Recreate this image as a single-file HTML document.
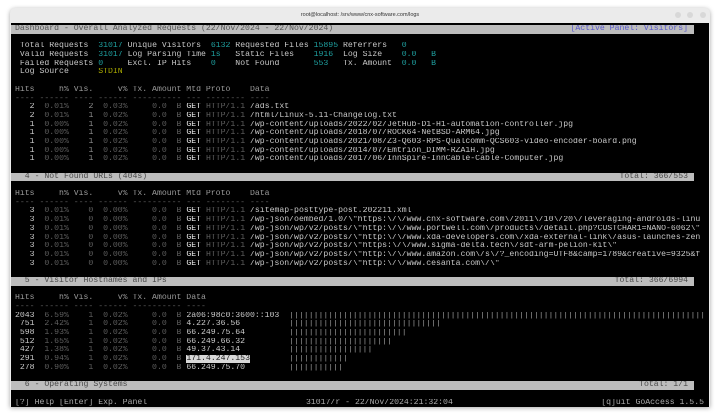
<!DOCTYPE html>
<html><head><meta charset="utf-8"><style>
html,body{margin:0;padding:0;background:#fff;width:720px;height:418px;overflow:hidden}
.win{position:absolute;left:10px;top:8px;width:700px;height:399px;background:#ebebeb;border-radius:5px 5px 0 0;box-shadow:0 1px 5px rgba(0,0,0,.35);overflow:hidden}
.title{position:absolute;left:0;right:0;top:4px;text-align:center;font:5.5px "Liberation Sans",sans-serif;color:#333}
.ctl{position:absolute;top:4px;width:6px;height:6px;border-radius:50%;background:#d8d8d8}
.term{position:absolute;left:1px;top:15px;width:698px;height:382px;padding-top:2px;background:#000;overflow:hidden;font-family:"Liberation Mono",monospace;font-size:8.17px}
.l{height:8.7px;line-height:8.7px;white-space:pre;padding-left:4px;color:#c8c8c8;overflow:hidden}
.bar{background:#bdbdbd;color:#4a4a4a;width:679px;position:relative}
.r{position:absolute;right:6px;top:0}
.t{color:#1e9e9e}.y{color:#a8a800}.d{color:#5e5e5e}.m{color:#8a8a8a}.w{color:#e8e8e8}.b{color:#9a9a9a}
.hl{background:#d8d8d8;color:#222}
.ap{color:#5a5acc}
</style></head><body>
<div class="win">
<div class="title">root@localhost: /srv/www/cnx-software.com/logs</div>
<div class="ctl" style="left:665px"></div><div class="ctl" style="left:677px"></div><div class="ctl" style="left:690px"></div>
<div class="term">
<div class="l bar" style="color:#555">Dashboard - Overall Analyzed Requests (22/Nov/2024 - 22/Nov/2024)<span class="r ap">[Active Panel: Visitors]</span></div>
<div class="l"> </div>
<div class="l"> Total Requests  <span class="t">31017 </span>Unique Visitors  <span class="t">6132 </span>Requested Files <span class="t">15895 </span>Referrers   <span class="t">0</span></div>
<div class="l"> Valid Requests  <span class="t">31017 </span>Log Parsing Time <span class="t">1s   </span>Static Files    <span class="t">1916  </span>Log Size    <span class="t">0.0   B</span></div>
<div class="l"> Failed Requests <span class="t">0     </span>Excl. IP Hits    <span class="t">0    </span>Not Found       <span class="t">553   </span>Tx. Amount  <span class="t">0.0   B</span></div>
<div class="l"> Log Source      <span class="y">STDIN</span></div>
<div class="l"> </div>
<div class="l b">Hits     h% Vis.     v% Tx. Amount Mtd Proto    Data</div>
<div class="l d">---- ------ ---- ------ ---------- --- -------- ----</div>
<div class="l">   2 <span class="d"> 0.01%    </span><span class="m">2</span><span class="d">  0.03%     0.0  B</span> <span class="w">GET</span> <span class="d">HTTP/1.1</span> /ads.txt</div>
<div class="l">   2 <span class="d"> 0.01%    </span><span class="m">1</span><span class="d">  0.02%     0.0  B</span> <span class="w">GET</span> <span class="d">HTTP/1.1</span> /html/Linux-5.11-Changelog.txt</div>
<div class="l">   1 <span class="d"> 0.00%    </span><span class="m">1</span><span class="d">  0.02%     0.0  B</span> <span class="w">GET</span> <span class="d">HTTP/1.1</span> /wp-content/uploads/2022/02/JetHub-D1-H1-automation-controller.jpg</div>
<div class="l">   1 <span class="d"> 0.00%    </span><span class="m">1</span><span class="d">  0.02%     0.0  B</span> <span class="w">GET</span> <span class="d">HTTP/1.1</span> /wp-content/uploads/2018/07/ROCK64-NetBSD-ARM64.jpg</div>
<div class="l">   1 <span class="d"> 0.00%    </span><span class="m">1</span><span class="d">  0.02%     0.0  B</span> <span class="w">GET</span> <span class="d">HTTP/1.1</span> /wp-content/uploads/2021/08/Z3-Q603-RPS-Qualcomm-QCS603-video-encoder-board.png</div>
<div class="l">   1 <span class="d"> 0.00%    </span><span class="m">1</span><span class="d">  0.02%     0.0  B</span> <span class="w">GET</span> <span class="d">HTTP/1.1</span> /wp-content/uploads/2014/07/Emtrion_DIMM-RZA1H.jpg</div>
<div class="l">   1 <span class="d"> 0.00%    </span><span class="m">1</span><span class="d">  0.02%     0.0  B</span> <span class="w">GET</span> <span class="d">HTTP/1.1</span> /wp-content/uploads/2017/06/InnSpire-InnCable-Cable-Computer.jpg</div>
<div class="l"> </div>
<div class="l bar">  4 - Not Found URLs (404s)<span class="r">Total: 366/553</span></div>
<div class="l"> </div>
<div class="l b">Hits     h% Vis.     v% Tx. Amount Mtd Proto    Data</div>
<div class="l d">---- ------ ---- ------ ---------- --- -------- ----</div>
<div class="l">   3 <span class="d"> 0.01%    0  0.00%     0.0  B</span> <span class="w">GET</span> <span class="d">HTTP/1.1</span> /sitemap-posttype-post.202211.xml</div>
<div class="l">   3 <span class="d"> 0.01%    0  0.00%     0.0  B</span> <span class="w">GET</span> <span class="d">HTTP/1.1</span> /wp-json/oembed/1.0/\"https:\/\/www.cnx-software.com\/2011\/10\/20\/leveraging-androids-linu</div>
<div class="l">   3 <span class="d"> 0.01%    0  0.00%     0.0  B</span> <span class="w">GET</span> <span class="d">HTTP/1.1</span> /wp-json/wp/v2/posts/\"http:\/\/www.portwell.com\/products\/detail.php?CUSTCHAR1=NANO-6062\"</div>
<div class="l">   3 <span class="d"> 0.01%    0  0.00%     0.0  B</span> <span class="w">GET</span> <span class="d">HTTP/1.1</span> /wp-json/wp/v2/posts/\"http:\/\/www.xda-developers.com\/xda-external-link\/asus-launches-zen</div>
<div class="l">   3 <span class="d"> 0.01%    0  0.00%     0.0  B</span> <span class="w">GET</span> <span class="d">HTTP/1.1</span> /wp-json/wp/v2/posts/\"https:\/\/www.sigma-delta.tech\/sdt-arm-pelion-kit\"</div>
<div class="l">   3 <span class="d"> 0.01%    0  0.00%     0.0  B</span> <span class="w">GET</span> <span class="d">HTTP/1.1</span> /wp-json/wp/v2/posts/\"http:\/\/www.amazon.com\/s\/?_encoding=UTF8&amp;camp=1789&amp;creative=9325&amp;f</div>
<div class="l">   3 <span class="d"> 0.01%    0  0.00%     0.0  B</span> <span class="w">GET</span> <span class="d">HTTP/1.1</span> /wp-json/wp/v2/posts/\"http:\/\/www.cesanta.com\/\"</div>
<div class="l"> </div>
<div class="l bar">  5 - Visitor Hostnames and IPs<span class="r">Total: 366/6994</span></div>
<div class="l"> </div>
<div class="l b">Hits     h% Vis.     v% Tx. Amount Data</div>
<div class="l d">---- ------ ---- ------ ---------- ----</div>
<div class="l">2043 <span class="d"> 6.59%    1  0.02%     0.0  B</span> 2a06:98c0:3600::103  <span class="b">|||||||||||||||||||||||||||||||||||||||||||||||||||||||||||||||||||||||||||||||||||||</span></div>
<div class="l"> 751 <span class="d"> 2.42%    1  0.02%     0.0  B</span> 4.227.36.56          <span class="b">|||||||||||||||||||||||||||||||</span></div>
<div class="l"> 598 <span class="d"> 1.93%    1  0.02%     0.0  B</span> 66.249.75.64         <span class="b">||||||||||||||||||||||||</span></div>
<div class="l"> 512 <span class="d"> 1.65%    1  0.02%     0.0  B</span> 66.249.66.32         <span class="b">|||||||||||||||||||||</span></div>
<div class="l"> 427 <span class="d"> 1.38%    1  0.02%     0.0  B</span> 49.37.43.14          <span class="b">|||||||||||||||||</span></div>
<div class="l"> 291 <span class="d"> 0.94%    1  0.02%     0.0  B</span> <span class="hl">171.4.247.153</span>        <span class="b">||||||||||||</span></div>
<div class="l"> 278 <span class="d"> 0.90%    1  0.02%     0.0  B</span> 66.249.75.70         <span class="b">|||||||||||</span></div>
<div class="l"> </div>
<div class="l bar">  6 - Operating Systems<span class="r">Total: 1/1</span></div>
<div class="l"> </div>
<div class="l" style="color:#aaa;position:relative;width:689px">[?] Help [Enter] Exp. Panel<span style="position:absolute;left:295px">31017/r - 22/Nov/2024:21:32:04</span><span class="r" style="right:0">[q]uit GoAccess 1.5.5</span></div>
</div>
</div>
</body></html>
